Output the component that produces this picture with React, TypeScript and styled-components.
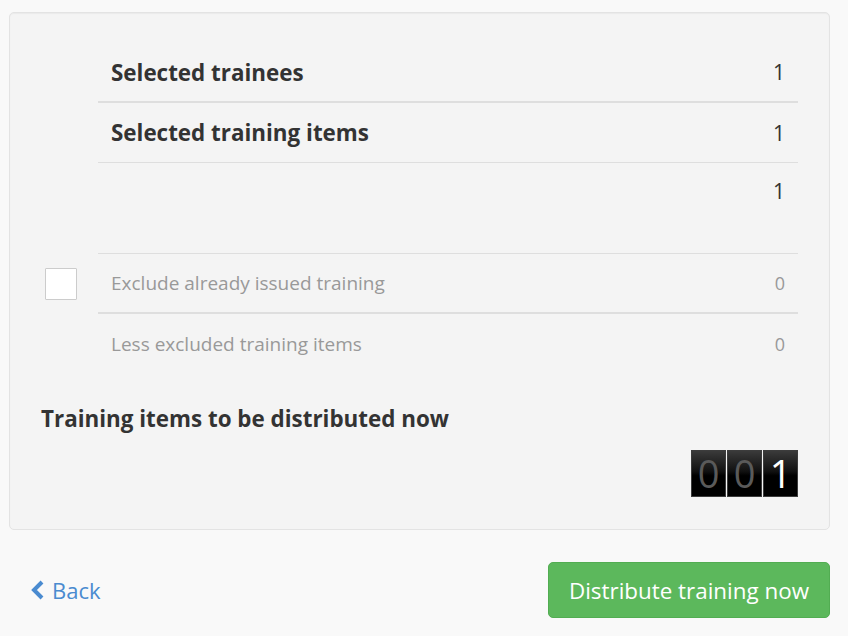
import React, { FunctionComponent, useState } from 'react';
import styled, { createGlobalStyle } from 'styled-components';

const GlobalStyle = createGlobalStyle`
    body {
        margin: 0;
        background: #f9f9f9;
        font-family: 'Open Sans', 'Liberation Sans', sans-serif;
        color: #333;
    }
`;

const Page = styled.div`
    padding: 12px 18px 0 9px;
`;

const Panel = styled.div`
    background: #f4f4f4;
    border: 1px solid #e3e3e3;
    border-radius: 5px;
    box-shadow: inset 0 1px 1px rgba(0, 0, 0, 0.04);
    padding: 30px 31px 32px 31px;
`;

const SummaryGrid = styled.div`
    display: grid;
    grid-template-columns: 57px 1fr;
`;

const CheckCell = styled.div`
    display: flex;
    align-items: center;
`;

const Checkbox = styled.button`
    width: 32px;
    height: 32px;
    margin-left: 4px;
    background: #fff;
    border: 1px solid #ccc;
    border-radius: 1px;
    padding: 0;
    cursor: pointer;
`;

const Row = styled.div<{ $height?: number; $border?: number; $muted?: boolean }>`
    display: flex;
    justify-content: space-between;
    align-items: ${(p) => (p.$height ? 'flex-start' : 'center')};
    height: ${(p) => p.$height ?? 60}px;
    padding: ${(p) => (p.$height ? '14px 13px 0' : '0 13px')};
    box-sizing: border-box;
    border-bottom: ${(p) => p.$border ?? 0}px solid #dedede;
    font-size: ${(p) => (p.$muted ? 19 : 22.4)}px;
    color: ${(p) => (p.$muted ? '#999' : '#333')};
`;

const Label = styled.span<{ $bold?: boolean }>`
    font-weight: ${(p) => (p.$bold ? 700 : 400)};
`;

const Value = styled.span<{ $muted?: boolean }>`
    font-size: ${(p) => (p.$muted ? 18 : 21)}px;
`;

const Heading = styled.h3`
    margin: 30px 0 0;
    font-size: 22.4px;
    font-weight: 700;
    line-height: 30px;
    color: #333;
`;

const CounterWrap = styled.div`
    display: flex;
    justify-content: flex-end;
    margin-top: 16px;
`;

const Digit = styled.div<{ $lit?: boolean }>`
    width: 33px;
    height: 45px;
    border: 1px solid #3c3c3c;
    margin-left: 1px;
    background: linear-gradient(to bottom, #3a3a3a 0%, #111 45%, #000 55%, #000 100%);
    color: ${(p) => (p.$lit ? '#fff' : '#5a5a5a')};
    font-family: 'Open Sans', sans-serif;
    font-size: 38px;
    line-height: 45px;
    text-align: center;
`;

const Footer = styled.div`
    display: flex;
    justify-content: space-between;
    align-items: center;
    margin-top: 32px;
`;

const BackLink = styled.a`
    display: flex;
    align-items: center;
    gap: 7px;
    margin-left: 22px;
    color: #4a8bd0;
    font-size: 22px;
    text-decoration: none;
    cursor: pointer;
`;

const PrimaryButton = styled.button`
    height: 56px;
    padding: 0 20px;
    background: #5cb85c;
    border: 1px solid #52ad52;
    border-radius: 5px;
    color: #fff;
    font-family: inherit;
    font-size: 22.4px;
    cursor: pointer;
`;

const ChevronLeft = () => (
    <svg width="14" height="20" viewBox="0 0 14 20">
        <path d="M11 2 L3 10 L11 18" fill="none" stroke="currentColor" strokeWidth="4" strokeLinejoin="miter" />
    </svg>
);

const App: FunctionComponent = () => {
    const [exclude, setExclude] = useState<boolean>(false);
    const total = 1;
    const digits = String(total).padStart(3, '0').split('');

    return (
        <>
            <GlobalStyle />
            <Page>
                <Panel>
                    <SummaryGrid>
                        <div />
                        <Row $border={2}>
                            <Label $bold>Selected trainees</Label>
                            <Value>1</Value>
                        </Row>
                        <div />
                        <Row $border={1}>
                            <Label $bold>Selected training items</Label>
                            <Value>1</Value>
                        </Row>
                        <div />
                        <Row $border={1} $height={91}>
                            <Label />
                            <Value>1</Value>
                        </Row>
                        <CheckCell>
                            <Checkbox onClick={() => setExclude(!exclude)} aria-pressed={exclude} />
                        </CheckCell>
                        <Row $border={2} $muted>
                            <Label>Exclude already issued training</Label>
                            <Value $muted>0</Value>
                        </Row>
                        <div />
                        <Row $muted>
                            <Label>Less excluded training items</Label>
                            <Value $muted>0</Value>
                        </Row>
                    </SummaryGrid>
                    <Heading>Training items to be distributed now</Heading>
                    <CounterWrap>
                        {digits.map((d, i) => (
                            <Digit key={i} $lit={i === digits.length - 1}>
                                {d}
                            </Digit>
                        ))}
                    </CounterWrap>
                </Panel>
                <Footer>
                    <BackLink>
                        <ChevronLeft />
                        Back
                    </BackLink>
                    <PrimaryButton>Distribute training now</PrimaryButton>
                </Footer>
            </Page>
        </>
    );
};

export default App;
